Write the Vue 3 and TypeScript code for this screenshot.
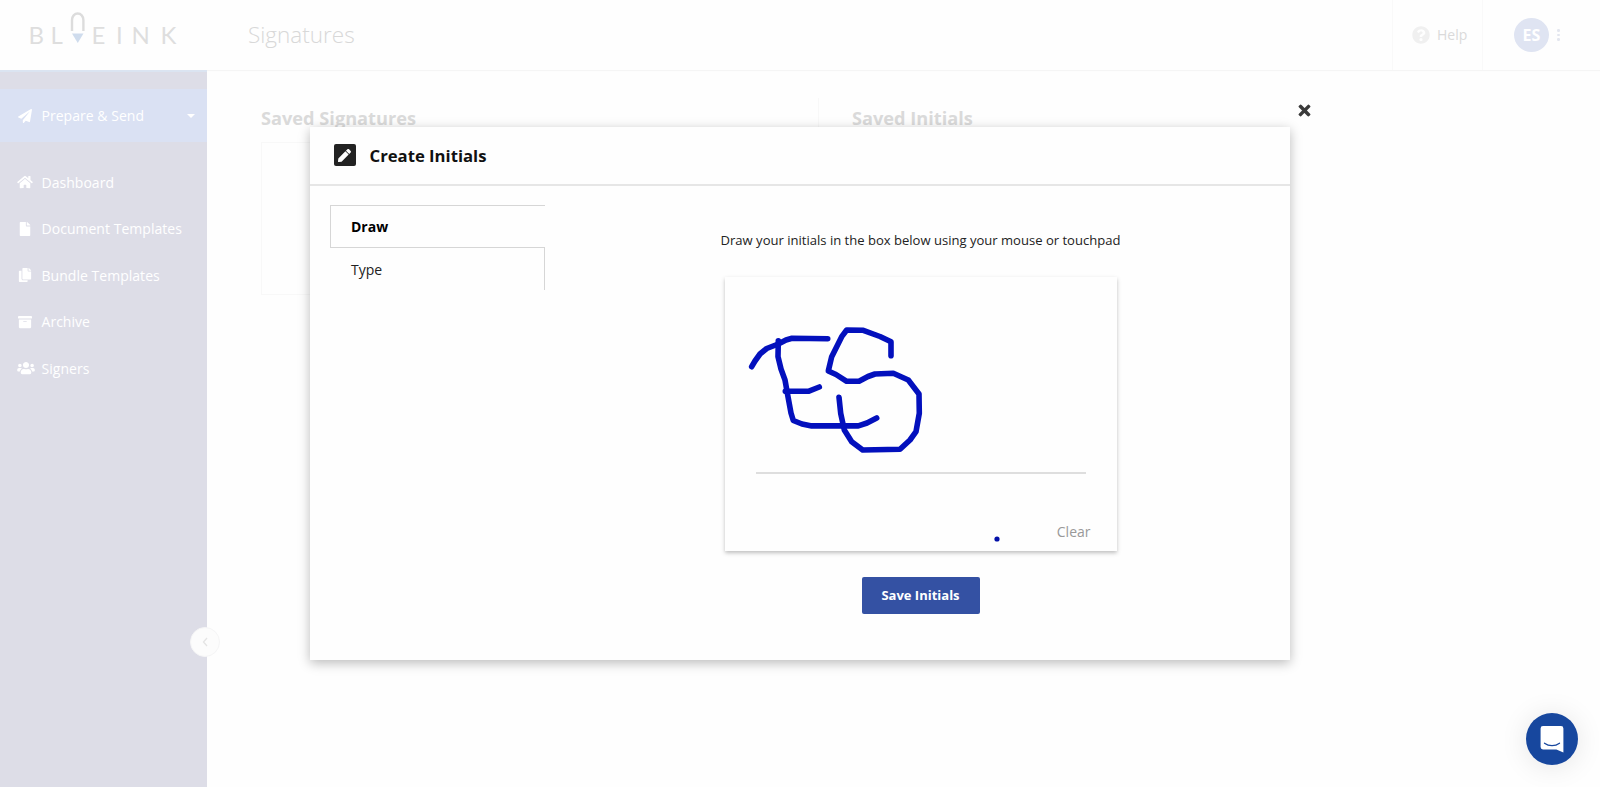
<script setup lang="ts">
import { ref } from 'vue';

interface INavItem {
  label: string;
  viewBox: string;
  path: string;
}

type Point = [number, number];

const navItems: INavItem[] = [
  {
    label: 'Dashboard',
    viewBox: '0 0 576 512',
    path: 'M280.37 148.26L96 300.11V464a16 16 0 0 0 16 16l112.06-.29a16 16 0 0 0 15.92-16V368a16 16 0 0 1 16-16h64a16 16 0 0 1 16 16v95.64a16 16 0 0 0 16 16.05L464 480a16 16 0 0 0 16-16V300L295.67 148.26a12.19 12.19 0 0 0-15.3 0zM571.6 251.47L488 182.56V44.05a12 12 0 0 0-12-12h-56a12 12 0 0 0-12 12v72.61L318.47 43a48 48 0 0 0-61 0L4.34 251.47a12 12 0 0 0-1.6 16.9l25.5 31A12 12 0 0 0 45.15 301l235.22-193.74a12.19 12.19 0 0 1 15.3 0L530.9 301a12 12 0 0 0 16.9-1.6l25.5-31a12 12 0 0 0-1.7-16.93z',
  },
  {
    label: 'Document Templates',
    viewBox: '0 0 384 512',
    path: 'M224 136V0H24C10.7 0 0 10.7 0 24v464c0 13.3 10.7 24 24 24h336c13.3 0 24-10.7 24-24V160H248c-13.2 0-24-10.8-24-24zm160-14.1v6.1H256V0h6.1c6.4 0 12.5 2.5 17 7l97.9 98c4.5 4.5 7 10.6 7 16.9z',
  },
  {
    label: 'Bundle Templates',
    viewBox: '0 0 448 512',
    path: 'M320 448v40c0 13.255-10.745 24-24 24H24c-13.255 0-24-10.745-24-24V120c0-13.255 10.745-24 24-24h72v296c0 30.879 25.121 56 56 56h168zm0-344V0H152c-13.255 0-24 10.745-24 24v368c0 13.255 10.745 24 24 24h272c13.255 0 24-10.745 24-24V128H344c-13.2 0-24-10.8-24-24zm120.971-31.029L375.029 7.029A24 24 0 0 0 358.059 0H352v96h96v-6.059a24 24 0 0 0-7.029-16.97z',
  },
  {
    label: 'Archive',
    viewBox: '0 0 512 512',
    path: 'M32 448c0 17.7 14.3 32 32 32h384c17.7 0 32-14.3 32-32V160H32v288zm160-212c0-6.6 5.4-12 12-12h104c6.6 0 12 5.4 12 12v8c0 6.6-5.4 12-12 12H204c-6.6 0-12-5.4-12-12v-8zM480 32H32C14.3 32 0 46.3 0 64v48c0 8.8 7.2 16 16 16h480c8.8 0 16-7.2 16-16V64c0-17.7-14.3-32-32-32z',
  },
  {
    label: 'Signers',
    viewBox: '0 0 640 512',
    path: 'M96 224c35.3 0 64-28.7 64-64s-28.7-64-64-64-64 28.7-64 64 28.7 64 64 64zm448 0c35.3 0 64-28.7 64-64s-28.7-64-64-64-64 28.7-64 64 28.7 64 64 64zm32 32h-64c-17.6 0-33.5 7.1-45.1 18.6 40.3 22.1 68.9 62 75.1 109.4h66c17.7 0 32-14.3 32-32v-32c0-35.3-28.7-64-64-64zm-256 0c61.9 0 112-50.1 112-112S381.9 32 320 32 208 82.1 208 144s50.1 112 112 112zm76.8 32h-8.3c-20.8 10-43.9 16-68.5 16s-47.6-6-68.5-16h-8.3C179.6 288 128 339.6 128 403.2V432c0 26.5 21.5 48 48 48h288c26.5 0 48-21.5 48-48v-28.8c0-63.6-51.6-115.2-115.2-115.2zm-223.7-13.4C161.5 263.1 145.6 256 128 256H64c-35.3 0-64 28.7-64 64v32c0 17.7 14.3 32 32 32h65.9c6.3-47.4 34.9-87.3 75.2-109.4z',
  },
];

const tabs = ['Draw', 'Type'];
const activeTab = ref('Draw');
const isOpen = ref(true);

const strokes = ref<Point[][]>([
  [[26.7, 89.7], [30, 84], [35, 77], [41.7, 71.5], [53.3, 67], [61, 63], [67, 61.3], [102.7, 61.7]],
  [[53.3, 63.7], [53, 79.7], [56, 92], [60, 103], [63, 119.7], [66, 136], [68.3, 143.5], [77, 147], [86.7, 148.9], [133.3, 148.9], [142, 146], [151.7, 141]],
  [[60.3, 114.3], [83.3, 114.3], [94.3, 110]],
  [
    [166, 78.7], [166, 64.7], [155, 59.5], [138.3, 53.3], [121.7, 53], [116.7, 59.7], [106.7, 79.7],
    [103.3, 94], [111, 97.5], [121.7, 104.3], [134, 104.3], [143, 99.5], [150, 97], [168.3, 96.3],
    [183.3, 103], [194, 117], [194.3, 136.3], [191, 154.7], [185, 163], [175, 172.3], [137.7, 173],
    [126.7, 164.7], [119.3, 153], [115.7, 136.3], [114, 120.3],
  ],
]);
const dots = ref<Point[]>([[272, 262]]);

const toPoints = (stroke: Point[]) => stroke.map((p) => p.join(',')).join(' ');

const clear = () => {
  strokes.value = [];
  dots.value = [];
};
</script>

<template>
  <div class="page">
    <header class="topbar">
      <svg class="logo" viewBox="0 0 150 36">
        <text class="logo-text" x="-1.5 20.5 61.5 86 101.500 130.500" y="32.500">BLEINK</text>
        <path class="logo-loop" d="M42 20V9a5.700 6.500 0 0 1 11.400 0v11" />
        <path class="logo-nib" d="M42 22.500h11.500l-5.750 9.500z" />
      </svg>
      <h1 class="title">Signatures</h1>
      <div class="help">
        <svg class="help-icon" viewBox="0 0 512 512">
          <path
            d="M504 256c0 136.997-111.043 248-248 248S8 392.997 8 256C8 119.083 119.043 8 256 8s248 111.083 248 248zM262.655 90c-54.497 0-89.255 22.957-116.549 63.758-3.536 5.286-2.353 12.415 2.715 16.258l34.699 26.31c5.205 3.947 12.621 3.008 16.665-2.122 17.864-22.658 30.113-35.797 57.303-35.797 20.429 0 45.698 13.148 45.698 32.958 0 14.976-12.363 22.667-32.534 33.976C247.128 238.528 216 254.941 216 296v4c0 6.627 5.373 12 12 12h56c6.627 0 12-5.373 12-12v-1.333c0-28.462 83.186-29.647 83.186-106.667 0-58.002-60.165-102-116.531-102zM256 338c-25.365 0-46 20.635-46 46 0 25.364 20.635 46 46 46s46-20.636 46-46c0-25.364-20.635-46-46-46z"
          />
        </svg>
        <span>Help</span>
      </div>
      <div class="account">
        <span class="avatar">ES</span>
        <span class="more"><i /><i /><i /></span>
      </div>
    </header>

    <div class="body">
      <aside class="sidebar">
        <a class="nav-item send">
          <svg class="nav-icon" viewBox="0 0 512 512">
            <path
              d="M476 3.2L12.5 270.6c-18.1 10.4-15.8 35.6 2.2 43.2L121 358.4l287.3-253.2c5.5-4.9 13.3 2.6 8.6 8.3L176 407v80.5c0 23.6 28.5 32.9 42.5 15.8L282 426l124.6 52.2c14.2 6 30.4-2.9 33-18.2l72-432C515 7.8 493.3-6.8 476 3.2z"
            />
          </svg>
          <span>Prepare &amp; Send</span>
          <span class="caret" />
        </a>
        <nav class="nav">
          <a
            v-for="item in navItems"
            :key="item.label"
            class="nav-item"
          >
            <svg
              class="nav-icon"
              :class="{ wide: item.label === 'Signers' }"
              :viewBox="item.viewBox"
            >
              <path :d="item.path" />
            </svg>
            <span>{{ item.label }}</span>
          </a>
        </nav>
        <button class="collapse">
          <svg viewBox="0 0 8 12"><path d="M6 2L2.500 6L6 10" /></svg>
        </button>
      </aside>

      <main class="content">
        <section class="saved">
          <h2>Saved Signatures</h2>
          <div class="card" />
        </section>
        <section class="saved initials">
          <h2>Saved Initials</h2>
        </section>
      </main>
    </div>

    <div
      v-if="isOpen"
      class="overlay"
    >
      <div class="modal">
        <div class="modal-header">
          <span class="edit-icon">
            <svg viewBox="0 0 512 512">
              <path
                d="M290.74 93.24l128.02 128.02-277.99 277.99-114.14 12.6C11.35 513.54-1.56 500.62.14 485.34l12.7-114.22 277.9-277.88zm207.2-19.06l-60.11-60.11c-18.75-18.75-49.16-18.75-67.91 0l-56.55 56.55 128.02 128.02 56.55-56.55c18.75-18.76 18.75-49.16 0-67.91z"
              />
            </svg>
          </span>
          <h3>Create Initials</h3>
        </div>
        <div class="modal-body">
          <div class="tabs">
            <button
              v-for="tab in tabs"
              :key="tab"
              class="tab"
              :class="{ active: tab === activeTab }"
              @click="activeTab = tab"
            >
              {{ tab }}
            </button>
          </div>
          <div class="panel">
            <p class="hint">Draw your initials in the box below using your mouse or touchpad</p>
            <div class="pad">
              <svg class="ink" viewBox="0 0 392 274">
                <polyline
                  v-for="(stroke, i) in strokes"
                  :key="i"
                  :points="toPoints(stroke)"
                />
                <circle
                  v-for="(dot, i) in dots"
                  :key="'dot' + i"
                  :cx="dot[0]"
                  :cy="dot[1]"
                  r="2.6"
                />
              </svg>
              <div class="baseline" />
              <button
                class="clear"
                @click="clear"
              >
                Clear
              </button>
            </div>
            <button class="save">Save Initials</button>
          </div>
        </div>
        <button
          class="close"
          aria-label="Close"
          @click="isOpen = false"
        >
          <svg viewBox="0 0 12 12"><path d="M2.200 2.200l7.600 7.600M9.800 2.200l-7.600 7.600" /></svg>
        </button>
      </div>
    </div>

    <button class="chat" aria-label="Chat">
      <svg viewBox="0 0 24 28">
        <path d="M3 1h18a2.4 2.4 0 0 1 2.4 2.4V27.4l-7-3H3A2.4 2.4 0 0 1 .6 22V3.4A2.4 2.4 0 0 1 3 1z" />
        <path class="smile" d="M4.5 18.2c4.4 3.300 10.6 3.300 15 0" />
      </svg>
    </button>
  </div>
</template>

<style>
body {
  background: #fefefe;
}
</style>

<style scoped>
* {
  box-sizing: border-box;
}
h1,
h2,
h3,
p {
  margin: 0;
}
button {
  padding: 0;
  border: 0;
  background: none;
  font: inherit;
  color: inherit;
}

.page {
  position: relative;
  display: flex;
  flex-direction: column;
  height: 787px;
  overflow: hidden;
  font-family: 'Open Sans', 'Noto Sans', sans-serif;
  font-size: 14px;
  background: #fefefe;
}

/* top bar */
.topbar {
  display: flex;
  flex: none;
  align-items: center;
  height: 70px;
  padding-left: 30px;
  box-shadow: 0 1px 1px #f5f5f5;
}
.logo {
  width: 150px;
  height: 36px;
  margin-top: -12px;
  overflow: visible;
}
.logo-text {
  font-family: Lato, sans-serif;
  font-size: 24px;
  fill: #dedede;
}
.logo-loop {
  fill: none;
  stroke: #dcdcdc;
  stroke-width: 2.4;
}
.logo-nib {
  fill: #cfdced;
}
.title {
  flex: 1;
  margin-left: 68px;
  padding-bottom: 2px;
  font-size: 22.5px;
  font-weight: 300;
  color: #d8d8d8;
}
.help {
  display: flex;
  align-items: center;
  gap: 7px;
  width: 90px;
  height: 100%;
  padding: 0 0 1px 19px;
  border-left: 1px solid #f9f9f9;
  color: #dadada;
}
.help-icon {
  width: 18px;
  height: 18px;
  fill: #f0f0f0;
}
.account {
  display: flex;
  align-items: center;
  gap: 8px;
  width: 118px;
  height: 100%;
  padding-left: 31px;
  border-left: 1px solid #f9f9f9;
}
.avatar {
  width: 35px;
  height: 34px;
  border-radius: 50%;
  background: #dfe4f2;
  color: #fff;
  font-size: 16px;
  font-weight: 700;
  line-height: 34px;
  text-align: center;
}
.more {
  display: flex;
  flex-direction: column;
  gap: 2px;
}
.more i {
  width: 2.5px;
  height: 2.5px;
  border-radius: 50%;
  background: #e3e6ef;
}

/* sidebar */
.body {
  display: flex;
  flex: 1;
}
.sidebar {
  position: relative;
  width: 207px;
  padding-top: 17px;
  border-top: 2px solid #dbe4f1;
  background: #dddde7;
}
.nav-item {
  display: flex;
  align-items: center;
  gap: 8.5px;
  height: 46.5px;
  padding-left: 17px;
  letter-spacing: 0.03px;
  color: #fff;
}
.nav-item.send {
  height: 53px;
  background: #dae1f3;
}
.nav {
  padding-top: 17px;
}
.nav-icon {
  width: 16px;
  height: 14px;
  fill: #fff;
}
.nav-icon.wide {
  width: 18px;
  margin-right: -2px;
}
.caret {
  margin: 1px 12px 0 auto;
  border: 4.5px solid transparent;
  border-top-color: #fff;
  border-bottom: 0;
}
.collapse {
  position: absolute;
  top: 555px;
  right: -13px;
  display: flex;
  align-items: center;
  justify-content: center;
  width: 30px;
  height: 30px;
  border: 1px solid #f5f5f6;
  border-radius: 50%;
  background: #fcfcfc;
}
.collapse svg {
  width: 8px;
  height: 12px;
  fill: none;
  stroke: #e4e4e4;
  stroke-width: 1.3;
}

/* content */
.content {
  display: grid;
  flex: 1;
  grid-template-columns: 557px 1fr;
  align-items: start;
  padding: 28px 54px 0;
}
.saved h2 {
  font-size: 18.2px;
  font-weight: 700;
  line-height: 40px;
  color: #dadada;
}
.saved .card {
  width: 300px;
  height: 153px;
  margin-top: 4px;
  border: 1px solid #f8f8f8;
}
.initials {
  height: 198px;
  padding-left: 33px;
  border-left: 1px solid #f8f8f8;
}

/* modal */
.overlay {
  position: absolute;
  inset: 0;
  padding: 127px 310px 0;
}
.modal {
  position: relative;
  height: 533px;
  background: #fefefe;
  box-shadow: 0 3px 11px rgba(0, 0, 0, 0.27);
}
.modal-header {
  display: flex;
  align-items: center;
  gap: 14px;
  height: 59px;
  padding: 0 0 1px 23.5px;
  border-bottom: 2px solid #e6e6e6;
}
.modal-header h3 {
  font-size: 16.7px;
  font-weight: 700;
  color: #111;
}
.edit-icon {
  display: flex;
  align-items: center;
  justify-content: center;
  width: 22px;
  height: 22px;
  border-radius: 2px;
  background: #222;
}
.edit-icon svg {
  width: 13px;
  height: 13px;
  fill: #fff;
}
.modal-body {
  display: flex;
  padding: 19px 20px;
}
.tabs {
  width: 215px;
}
.tab {
  display: block;
  width: 100%;
  height: 42px;
  padding-left: 21px;
  border-right: 1px solid #d6d6d6;
  text-align: left;
  color: #222;
}
.tab.active {
  height: 43px;
  border: 1px solid #d6d6d6;
  border-right: 0;
  padding-left: 20px;
  font-weight: 700;
  color: #000;
}
.panel {
  display: flex;
  flex: 1;
  flex-direction: column;
  align-items: center;
  padding: 24px 0 0 26px;
}
.hint {
  font-size: 13.05px;
  line-height: 22px;
  white-space: nowrap;
  color: #222;
}
.pad {
  position: relative;
  display: flex;
  flex-direction: column;
  width: 392px;
  height: 274px;
  margin-top: 26px;
  padding: 195px 26px 0 31px;
  box-shadow: 0 2px 4px rgba(0, 0, 0, 0.25);
}
.ink {
  position: absolute;
  inset: 0;
  width: 392px;
  height: 274px;
  fill: none;
  stroke: #0310bd;
  stroke-width: 5.6;
  stroke-linecap: round;
  stroke-linejoin: round;
  pointer-events: none;
}
.ink circle {
  fill: #0310a8;
  stroke: none;
}
.baseline {
  width: 330px;
  height: 2px;
  background: #dedede;
}
.clear {
  align-self: flex-end;
  margin-top: 48px;
  line-height: 20px;
  color: #999;
}
.save {
  width: 118px;
  height: 37px;
  margin-top: 26px;
  padding-bottom: 1px;
  border-radius: 2px;
  background: #3451a3;
  color: #fff;
  font-size: 13px;
  font-weight: 700;
}
.close {
  position: absolute;
  top: -24px;
  right: -22px;
  width: 15px;
  height: 15px;
}
.close svg {
  display: block;
  width: 15px;
  height: 15px;
  stroke: #3a3a3a;
  stroke-width: 3.4;
  stroke-linecap: square;
  stroke-linejoin: round;
  transform: scale(0.82);
}

/* chat launcher */
.chat {
  position: absolute;
  right: 22px;
  bottom: 22px;
  display: flex;
  align-items: center;
  justify-content: center;
  width: 52px;
  height: 52px;
  border-radius: 50%;
  background: #17479e;
  box-shadow: 0 2px 28px rgba(0, 0, 0, 0.1);
}
.chat svg {
  width: 24px;
  height: 28px;
  fill: #fff;
}
.chat .smile {
  fill: none;
  stroke: #17479e;
  stroke-width: 1.3;
  stroke-linecap: round;
}
</style>
